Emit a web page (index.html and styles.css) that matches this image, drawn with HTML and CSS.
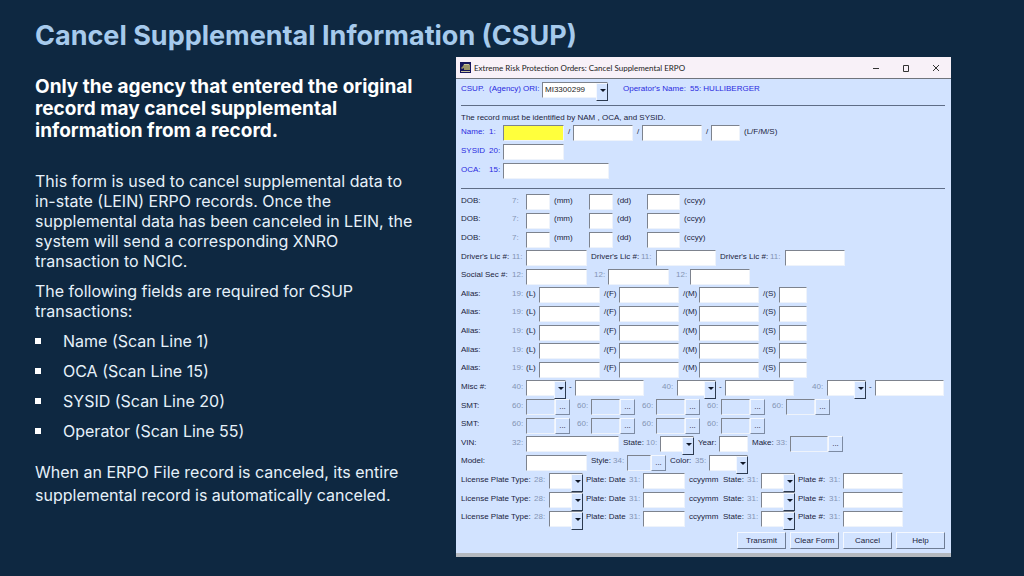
FILE: index.html
```html
<!DOCTYPE html>
<html lang="en">
<head>
    <meta charset="UTF-8">
    <title>Cancel Supplemental Information (CSUP)</title>
    <link rel="stylesheet" href="styles.css">
</head>
<body>
    <div class="slide">
        <h1>Cancel Supplemental Information (CSUP)</h1>
        <div class="columns">
            <div class="notes">
                <p class="lead">Only the agency that entered the original<br>record may cancel supplemental<br>information from a record.</p>
                <p>This form is used to cancel supplemental data to<br>in-state (LEIN) ERPO records. Once the<br>supplemental data has been canceled in LEIN, the<br>system will send a corresponding XNRO<br>transaction to NCIC.</p>
                <p>The following fields are required for CSUP<br>transactions:</p>
                <ul>
                    <li>Name (Scan Line 1)</li>
                    <li>OCA (Scan Line 15)</li>
                    <li>SYSID (Scan Line 20)</li>
                    <li>Operator (Scan Line 55)</li>
                </ul>
                <p class="closing">When an ERPO File record is canceled, its entire<br>supplemental record is automatically canceled.</p>
            </div>

            <div class="window">
                <div class="titlebar">
                    <svg class="app-icon" width="11" height="11" viewBox="0 0 11 11">
                        <rect width="11" height="11" fill="#15155c"/>
                        <path d="M1 6l2-2 1-2h5l1 1v5H4V6L2 7z" fill="#9a9468"/>
                        <path d="M4 2.5h5M1 9.5h9" stroke="#c8c49a" stroke-width="1"/>
                    </svg>
                    <span class="caption">Extreme Risk Protection Orders: Cancel Supplemental ERPO</span>
                    <button type="button" aria-label="Minimize"><svg width="8" height="8" viewBox="0 0 8 8"><path d="M1 4.5h6"/></svg></button>
                    <button type="button" aria-label="Maximize"><svg width="8" height="8" viewBox="0 0 8 8"><path d="M1.5 1.5h5v6h-5z"/></svg></button>
                    <button type="button" aria-label="Close"><svg width="8" height="8" viewBox="0 0 8 8"><path d="M1 1l6 6M7 1L1 7"/></svg></button>
                </div>

                <form class="form">
                    <div class="row header blue">
                        <span>CSUP.</span><span>(Agency)</span><label for="ori">ORI:</label>
                        <span class="combo"><select id="ori"><option>MI3300299</option></select></span>
                        <span class="operator">Operator's Name:</span><span>55: HULLIBERGER</span>
                    </div>
                    <hr>
                    <p class="hint">The record must be identified by NAM , OCA, and SYSID.</p>
                    <div class="ids">
                        <div class="row name">
                            <label class="blue" for="nameL">Name:</label><span class="blue">1:</span><input type="text" class="active" id="nameL">
                            <span class="unit">/</span><input type="text" aria-label="First name">
                            <span class="unit">/</span><input type="text" aria-label="Middle name">
                            <span class="unit">/</span><input type="text" aria-label="Suffix">
                            <span class="unit">(L/F/M/S)</span>
                        </div>
                        <div class="row sysid">
                            <label class="blue" for="sysid">SYSID</label><span class="blue">20:</span><input type="text" id="sysid">
                        </div>
                        <div class="row oca">
                            <label class="blue" for="oca">OCA:</label><span class="blue">15:</span><input type="text" id="oca">
                        </div>
                    </div>
                    <hr>

                    <div class="fields">
                        <div class="row dob">
                            <label for="dob1">DOB:</label><span class="num">7:</span><input type="text" id="dob1"><span class="unit">(mm)</span>
                            <input type="text" aria-label="Day"><span class="unit">(dd)</span><input type="text" aria-label="Year"><span class="unit">(ccyy)</span>
                        </div>
                        <div class="row dob">
                            <label for="dob2">DOB:</label><span class="num">7:</span><input type="text" id="dob2"><span class="unit">(mm)</span>
                            <input type="text" aria-label="Day"><span class="unit">(dd)</span><input type="text" aria-label="Year"><span class="unit">(ccyy)</span>
                        </div>
                        <div class="row dob">
                            <label for="dob3">DOB:</label><span class="num">7:</span><input type="text" id="dob3"><span class="unit">(mm)</span>
                            <input type="text" aria-label="Day"><span class="unit">(dd)</span><input type="text" aria-label="Year"><span class="unit">(ccyy)</span>
                        </div>
                        <div class="row license">
                            <label for="lic1">Driver's Lic #:</label><span class="num">11:</span><input type="text" id="lic1">
                            <label class="unit" for="lic2">Driver's Lic #:</label><span class="num">11:</span><input type="text" id="lic2">
                            <label class="unit" for="lic3">Driver's Lic #:</label><span class="num">11:</span><input type="text" id="lic3">
                        </div>
                        <div class="row social">
                            <label for="ssn1">Social Sec #:</label><span class="num">12:</span><input type="text" id="ssn1">
                            <label class="num gap" for="ssn2">12:</label><input type="text" id="ssn2">
                            <label class="num gap" for="ssn3">12:</label><input type="text" id="ssn3">
                        </div>
                        <div class="row alias">
                            <span>Alias:</span><span class="num">19:</span><label for="aliasL1">(L)</label><input type="text" id="aliasL1">
                            <label class="unit" for="aliasF1">/(F)</label><input type="text" id="aliasF1">
                            <label class="unit" for="aliasM1">/(M)</label><input type="text" id="aliasM1">
                            <label class="unit" for="aliasS1">/(S)</label><input type="text" id="aliasS1">
                        </div>
                        <div class="row alias">
                            <span>Alias:</span><span class="num">19:</span><label for="aliasL2">(L)</label><input type="text" id="aliasL2">
                            <label class="unit" for="aliasF2">/(F)</label><input type="text" id="aliasF2">
                            <label class="unit" for="aliasM2">/(M)</label><input type="text" id="aliasM2">
                            <label class="unit" for="aliasS2">/(S)</label><input type="text" id="aliasS2">
                        </div>
                        <div class="row alias">
                            <span>Alias:</span><span class="num">19:</span><label for="aliasL3">(L)</label><input type="text" id="aliasL3">
                            <label class="unit" for="aliasF3">/(F)</label><input type="text" id="aliasF3">
                            <label class="unit" for="aliasM3">/(M)</label><input type="text" id="aliasM3">
                            <label class="unit" for="aliasS3">/(S)</label><input type="text" id="aliasS3">
                        </div>
                        <div class="row alias">
                            <span>Alias:</span><span class="num">19:</span><label for="aliasL4">(L)</label><input type="text" id="aliasL4">
                            <label class="unit" for="aliasF4">/(F)</label><input type="text" id="aliasF4">
                            <label class="unit" for="aliasM4">/(M)</label><input type="text" id="aliasM4">
                            <label class="unit" for="aliasS4">/(S)</label><input type="text" id="aliasS4">
                        </div>
                        <div class="row alias">
                            <span>Alias:</span><span class="num">19:</span><label for="aliasL5">(L)</label><input type="text" id="aliasL5">
                            <label class="unit" for="aliasF5">/(F)</label><input type="text" id="aliasF5">
                            <label class="unit" for="aliasM5">/(M)</label><input type="text" id="aliasM5">
                            <label class="unit" for="aliasS5">/(S)</label><input type="text" id="aliasS5">
                        </div>
                        <div class="row misc">
                            <label for="misc1">Misc #:</label><span class="num">40:</span><span class="combo"><select id="misc1"></select></span>
                            <span class="dash">-</span><input type="text" aria-label="Misc number 1">
                            <label class="num right" for="misc2">40:</label><span class="combo"><select id="misc2"></select></span>
                            <span class="dash">-</span><input type="text" aria-label="Misc number 2">
                            <label class="num right" for="misc3">40:</label><span class="combo"><select id="misc3"></select></span>
                            <span class="dash">-</span><input type="text" aria-label="Misc number 3">
                        </div>
                        <div class="row smt">
                            <span>SMT:</span><label class="num" for="smt1">60:</label><input type="text" id="smt1" disabled><button type="button" class="browse">...</button>
                            <label class="num gap" for="smt2">60:</label><input type="text" id="smt2" disabled><button type="button" class="browse">...</button>
                            <label class="num gap" for="smt3">60:</label><input type="text" id="smt3" disabled><button type="button" class="browse">...</button>
                            <label class="num gap" for="smt4">60:</label><input type="text" id="smt4" disabled><button type="button" class="browse">...</button>
                            <label class="num gap" for="smt5">60:</label><input type="text" id="smt5" disabled><button type="button" class="browse">...</button>
                        </div>
                        <div class="row smt">
                            <span>SMT:</span><label class="num" for="smt6">60:</label><input type="text" id="smt6" disabled><button type="button" class="browse">...</button>
                            <label class="num gap" for="smt7">60:</label><input type="text" id="smt7" disabled><button type="button" class="browse">...</button>
                            <label class="num gap" for="smt8">60:</label><input type="text" id="smt8" disabled><button type="button" class="browse">...</button>
                            <label class="num gap" for="smt9">60:</label><input type="text" id="smt9" disabled><button type="button" class="browse">...</button>
                        </div>
                        <div class="row vin">
                            <label for="vin">VIN:</label><span class="num">32:</span><input type="text" id="vin">
                            <label class="unit" for="vinState">State:</label><span class="num">10:</span><span class="combo"><select id="vinState"></select></span>
                            <label class="unit" for="vinYear">Year:</label><input type="text" id="vinYear">
                            <label class="unit" for="make">Make:</label><span class="num">33:</span><input type="text" id="make" disabled><button type="button" class="browse">...</button>
                        </div>
                        <div class="row model">
                            <label for="model">Model:</label><input type="text" id="model">
                            <label class="unit" for="style">Style:</label><span class="num">34:</span><input type="text" id="style" disabled><button type="button" class="browse">...</button>
                            <label class="unit" for="color">Color:</label><span class="num">35:</span><span class="combo"><select id="color"></select></span>
                        </div>
                        <div class="row plate">
                            <label for="type1">License Plate Type:</label><span class="num">28:</span><span class="combo"><select id="type1"></select></span>
                            <label class="dash" for="date1">Plate: Date</label><span class="num">31:</span><input type="text" id="date1"><span class="unit">ccyymm</span>
                            <label for="state1">State:</label><span class="num">31:</span><span class="combo"><select id="state1"></select></span>
                            <label class="dash" for="plate1">Plate #:</label><span class="num">31:</span><input type="text" id="plate1">
                        </div>
                        <div class="row plate">
                            <label for="type2">License Plate Type:</label><span class="num">28:</span><span class="combo"><select id="type2"></select></span>
                            <label class="dash" for="date2">Plate: Date</label><span class="num">31:</span><input type="text" id="date2"><span class="unit">ccyymm</span>
                            <label for="state2">State:</label><span class="num">31:</span><span class="combo"><select id="state2"></select></span>
                            <label class="dash" for="plate2">Plate #:</label><span class="num">31:</span><input type="text" id="plate2">
                        </div>
                        <div class="row plate">
                            <label for="type3">License Plate Type:</label><span class="num">28:</span><span class="combo"><select id="type3"></select></span>
                            <label class="dash" for="date3">Plate: Date</label><span class="num">31:</span><input type="text" id="date3"><span class="unit">ccyymm</span>
                            <label for="state3">State:</label><span class="num">31:</span><span class="combo"><select id="state3"></select></span>
                            <label class="dash" for="plate3">Plate #:</label><span class="num">31:</span><input type="text" id="plate3">
                        </div>
                    </div>

                    <div class="actions">
                        <button type="button">Transmit</button>
                        <button type="reset">Clear Form</button>
                        <button type="button">Cancel</button>
                        <button type="button">Help</button>
                    </div>
                </form>
            </div>
        </div>
    </div>
</body>
</html>
```
FILE: styles.css
```css
* {
    box-sizing: border-box;
}
body {
    margin: 0;
    background-color: #0e2841;
    color: #e6f1fa;
    font-family: Inter, "Noto Sans", sans-serif;
}
.slide {
    min-height: 100vh;
    display: flex;
    flex-direction: column;
    padding: 19px 73px 19px 35px;
}
h1 {
    margin: 0 0 4px;
    font-size: 27px;
    line-height: 34px;
    font-weight: 700;
    color: #a6caec;
    white-space: nowrap;
}
.columns {
    flex: 1;
    display: grid;
    grid-template-columns: minmax(0, 4fr) minmax(0, 5fr);
    gap: 25px;
}

/* left text */
.notes {
    padding-top: 19px;
    font-size: 16px;
    line-height: 20px;
    white-space: nowrap;
}
.notes p {
    margin: 0 0 10px;
}
.notes .lead {
    margin-bottom: 29px;
    font-size: 19px;
    line-height: 22px;
    font-weight: 700;
    color: #fff;
}
.notes ul {
    margin: 0;
    padding: 0;
    list-style: none;
}
.notes li {
    display: flex;
    align-items: center;
    gap: 22px;
    margin-bottom: 10px;
}
.notes li::before {
    content: "";
    width: 6px;
    height: 6px;
    background-color: #fff;
}
.notes .closing {
    margin-top: 20px;
    line-height: 23px;
}

/* application window */
.window {
    display: flex;
    flex-direction: column;
    background-color: #d2e3ff;
    border-bottom: 4px solid #b4b9bf;
    color: #1b2440;
    font-family: "Liberation Sans", Arial, sans-serif;
    font-size: 8px;
    line-height: 10px;
}
.titlebar {
    display: flex;
    align-items: center;
    height: 22px;
    padding-left: 4px;
    background-color: #f8f1f8;
    border-bottom: 1px solid #70747c;
    font-family: Lato, sans-serif;
    color: #222;
}
.caption {
    flex: 1;
    padding-left: 3px;
    white-space: nowrap;
}
.titlebar button {
    width: 30px;
    height: 20px;
    padding: 0;
    border: none;
    background: none;
}
.titlebar button svg {
    fill: none;
    stroke: #333;
}
.form {
    flex: 1;
    display: flex;
    flex-direction: column;
    padding: 3px 6px 4px 5px;
}
hr {
    width: 100%;
    height: 1px;
    margin: 0;
    border: none;
    background-color: #5f6d86;
}
.hint {
    margin: 7px 0 2px;
}
.ids {
    display: grid;
    row-gap: 3px;
    margin-bottom: 9px;
}
.fields {
    flex: 1;
    display: grid;
    grid-auto-rows: 1fr;
    padding-top: 4px;
}
.row {
    display: grid;
    align-items: center;
    white-space: nowrap;
}
.row > label,
.row > span:not(.combo) {
    padding-bottom: 3px;
}
.blue {
    color: #2a2ae0;
}
.num {
    color: #8494b4;
}
.unit {
    padding-left: 4px;
}
.dash {
    padding-left: 3px;
}
.gap {
    padding-left: 7px;
}
.right {
    padding-left: 18px;
}
.header {
    grid-template-columns: 28px 34px 19px 66px 82px 1fr;
    margin-bottom: 7px;
}
.operator {
    padding-left: 15px;
}
.name { grid-template-columns: 28px 14px 61px 9px 60px 9px 60px 9px 29px 1fr; }
.sysid { grid-template-columns: 28px 14px 61px; }
.oca { grid-template-columns: 28px 14px 106px; }
.dob { grid-template-columns: 51px 14px 24px 39px 24px 34px 33px 1fr; }
.license { grid-template-columns: 51px 14px 61px 54px 15px 60px 54px 15px 60px; }
.social { grid-template-columns: 51px 14px 61px 21px 61px 21px 60px; }
.alias { grid-template-columns: 51px 14px 13px 61px 19px 60px 20px 60px 20px 28px; }
.misc { grid-template-columns: 51px 14px 40px 9px 69px 33px 39px 9px 69px 33px 39px 9px 69px; }
.smt { grid-template-columns: 51px 14px repeat(5, 29px 15px 21px); }
.vin { grid-template-columns: 51px 14px 93px 27px 14px 34px 25px 29px 28px 14px 38px 15px; }
.model { grid-template-columns: 65px 61px 26px 14px 24px 15px 29px 14px 39px; }
.plate { grid-template-columns: 73px 15px 34px 46px 14px 42px 38px 24px 14px 34px 34px 14px 60px; }

input,
select {
    width: 100%;
    height: 16px;
    margin: 0;
    padding: 0 2px;
    border: 1px solid;
    border-color: #7d838e #eef3fb #eef3fb #7d838e;
    border-radius: 0;
    background-color: #fff;
    color: #222;
    font: inherit;
    appearance: none;
}
input.active {
    background-color: #ffff3c;
}
input:disabled {
    background-color: #d2e3ff;
}

/* drop-down with a raised arrow button */
.combo {
    position: relative;
    display: flex;
}
.combo::before {
    content: "";
    position: absolute;
    top: 1px;
    right: 0;
    width: 10px;
    height: 16px;
    background-color: #d2e3ff;
    border: 1px solid;
    border-color: #f4f8ff #2c3a50 #2c3a50 #f4f8ff;
    pointer-events: none;
}
.combo::after {
    content: "";
    position: absolute;
    top: 7px;
    right: 2px;
    border: 3px solid transparent;
    border-top-color: #101828;
    border-bottom: none;
    pointer-events: none;
}
.browse {
    height: 16px;
    padding: 0;
    border: 1px solid;
    border-color: #f4f8ff #7d8ba3 #7d8ba3 #f4f8ff;
    background-color: #d2e3ff;
    color: #1b2440;
    font: inherit;
}
.actions {
    display: flex;
    justify-content: flex-end;
    gap: 4px;
    padding-top: 4px;
}
.actions button {
    width: 49px;
    height: 17px;
    padding: 0;
    border: 1px solid;
    border-color: #f4f8ff #6e7c94 #6e7c94 #f4f8ff;
    background-color: #d2e3ff;
    color: #1b2440;
    font: inherit;
}
```
